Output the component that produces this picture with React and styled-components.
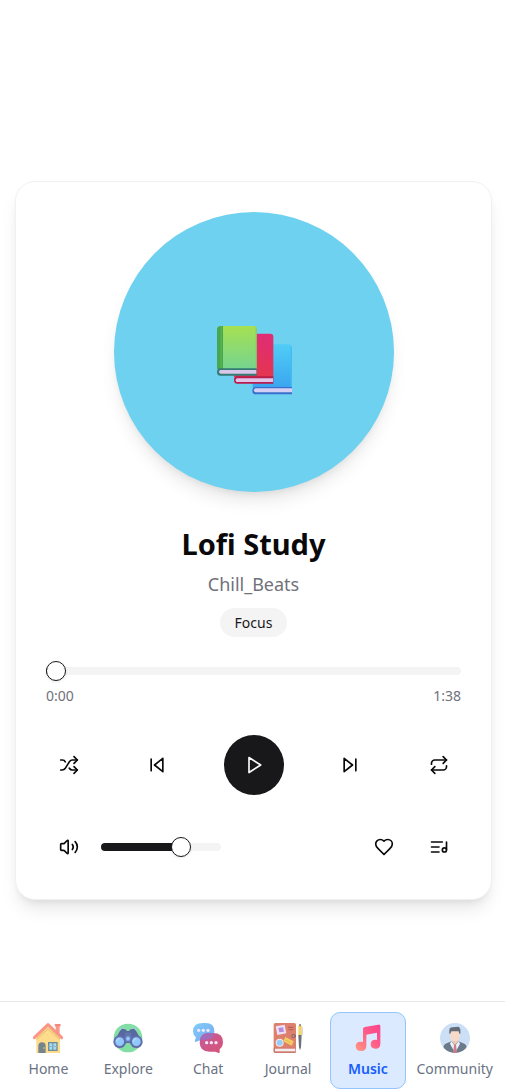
import React, { useState } from "react";
import styled, { createGlobalStyle } from "styled-components";
import { Shuffle, Repeat, Volume2 } from "lucide-react";

const GlobalStyle = createGlobalStyle`
  *, *::before, *::after { box-sizing: border-box; }
  body {
    margin: 0;
    background: #fff;
    color: #09090b;
    font-family: "Noto Sans", "Open Sans", sans-serif;
  }
  h1, p { margin: 0; }
  button { font: inherit; color: inherit; cursor: pointer; }
`;

const Page = styled.div`
  min-height: 100vh;
  display: flex;
  flex-direction: column;
`;

const Main = styled.main`
  flex: 1;
  display: flex;
  align-items: center;
  justify-content: center;
  padding: 80px 13px 0 15px;
`;

const Card = styled.section`
  width: 100%;
  max-width: 560px;
  display: flex;
  flex-direction: column;
  padding: 30px;
  border: 1px solid #f1f1f2;
  border-radius: 20px;
  background: #fff;
  box-shadow: 0 12px 18px -4px rgba(0, 0, 0, 0.1), 0 5px 8px -5px rgba(0, 0, 0, 0.1);
`;

const Cover = styled.div`
  width: 280px;
  height: 280px;
  align-self: center;
  display: flex;
  align-items: center;
  justify-content: center;
  padding: 16px 0 0 2px;
  border-radius: 50%;
  background: #6dd1ef;
  box-shadow: 0 12px 18px -4px rgba(0, 0, 0, 0.1), 0 5px 8px -5px rgba(0, 0, 0, 0.1);
`;

const TrackInfo = styled.div`
  display: flex;
  flex-direction: column;
  align-items: center;
  margin-top: 32px;
`;

const Title = styled.h1`
  font-size: 29px;
  line-height: 40px;
  font-weight: 700;
`;

const Artist = styled.p`
  margin-top: 5px;
  font-size: 18px;
  line-height: 30px;
  color: #71717a;
`;

const Badge = styled.span`
  margin-top: 9px;
  padding: 0 15px;
  border-radius: 15px;
  background: #f4f4f5;
  color: #18181b;
  font-size: 14px;
  line-height: 29px;
`;

const Slider = styled.input`
  --fill: calc(10px + (100% - 20px) * ${(p) => p.$ratio});
  appearance: none;
  display: block;
  width: ${(p) => p.$width || "100%"};
  height: 20px;
  margin: 0;
  background: transparent;
  cursor: pointer;

  &::-webkit-slider-runnable-track {
    height: 8px;
    border-radius: 4px;
    background: linear-gradient(to right, #18181b var(--fill), #f4f4f5 var(--fill));
  }
  &::-webkit-slider-thumb {
    appearance: none;
    width: 20px;
    height: 20px;
    margin-top: -6px;
    border: 1px solid #18181b;
    border-radius: 50%;
    background: #fff;
    box-shadow: 0 1px 3px rgba(0, 0, 0, 0.1);
  }
`;

const Progress = styled.div`
  margin-top: 24px;
`;

const Times = styled.div`
  display: flex;
  justify-content: space-between;
  margin-top: 5px;
  font-size: 14px;
  line-height: 20px;
  color: #71717a;
`;

const Controls = styled.div`
  display: flex;
  align-items: center;
  justify-content: space-between;
  margin-top: 29px;
`;

const Group = styled.div`
  display: flex;
  align-items: center;
  gap: 10px;
`;

const IconButton = styled.button`
  width: ${(p) => (p.$primary ? "60px" : "45px")};
  height: ${(p) => (p.$primary ? "60px" : "45px")};
  display: flex;
  align-items: center;
  justify-content: center;
  padding: 0;
  border: 0;
  border-radius: ${(p) => (p.$primary ? "50%" : "8px")};
  background: ${(p) => (p.$primary ? "#18181b" : "transparent")};
  color: ${(p) => (p.$primary ? "#fafafa" : "#09090b")};
`;

const Nav = styled.nav`
  display: flex;
  gap: 3px;
  padding: 10px 5px 1px 10px;
  border-top: 1px solid #e5e7eb;
  background: #fff;
`;

const NavItem = styled.a`
  flex: 1 1 0;
  display: flex;
  flex-direction: column;
  align-items: center;
  gap: 5px;
  padding: 10px 6px 8px;
  border: 1px solid ${(p) => (p.$active ? "#93c5fd" : "transparent")};
  border-radius: 10px;
  background: ${(p) => (p.$active ? "#dbeafe" : "transparent")};
  color: ${(p) => (p.$active ? "#155dfc" : "#6a7282")};
  font-size: 14px;
  line-height: 22px;
  font-weight: ${(p) => (p.$active ? 600 : 400)};
  text-decoration: none;
`;

const Glyph = ({ children }) => (
  <svg width="20" height="20" viewBox="0 0 24 24" fill="none" stroke="currentColor"
    strokeWidth="2" strokeLinecap="round" strokeLinejoin="round" aria-hidden="true">
    {children}
  </svg>
);

const Books = () => (
  <svg width="76" height="70" viewBox="0 0 228 210" aria-hidden="true">
    <defs>
      <linearGradient id="bookGreen" x2="0" y2="1">
        <stop stopColor="#a6e052" /><stop offset="1" stopColor="#75d58f" />
      </linearGradient>
      <linearGradient id="bookRed" x2="0" y2="1">
        <stop stopColor="#df2c76" /><stop offset="1" stopColor="#e5364f" />
      </linearGradient>
      <linearGradient id="bookBlue" x2="0" y2="1">
        <stop stopColor="#50cdf6" /><stop offset="1" stopColor="#3ba5ef" />
      </linearGradient>
    </defs>
    <path d="M107 70q0-12 12-12h95q11 0 11 11v120H107z" fill="url(#bookBlue)" />
    <path d="M221 62q4 3 4 9v117h-4z" fill="#42bdf4" />
    <path d="M116 186h109v22H116q-10 0-10-11t10-11z" fill="#3a6fce" />
    <path d="M116 190h109v12H116q-5 0-5-6t5-6z" fill="#d5d0f3" />
    <path d="M51 38q0-12 12-12h97q9 0 9 9v122H51z" fill="url(#bookRed)" />
    <path d="M61 154h108v22H61q-10 0-10-11t10-11z" fill="#b91c4d" />
    <path d="M61 160h107v11H61q-5 0-5-5.500t5-5.500z" fill="#e1c4e8" />
    <path d="M0 14Q0 3 11 3h100q8 0 8 8v121H0z" fill="url(#bookGreen)" />
    <path d="M0 14Q0 3 11 3h7v129H0z" fill="#49a650" />
    <path d="M11 3h3v129h-3z" fill="#5fb852" />
    <path d="M116 5q3 2 3 6v121h-3z" fill="#83c95d" />
    <path d="M10 130h109v22H10q-10 0-10-11t10-11z" fill="#357b75" />
    <path d="M11 135h107v11H11q-5 0-5-5.500t5-5.500z" fill="#d9c7e9" />
  </svg>
);

const NavSvg = ({ children }) => (
  <svg width="30" height="30" viewBox="0 0 90 90" aria-hidden="true">{children}</svg>
);

const HomeIcon = () => (
  <NavSvg>
    <path d="M68 6h12v30L68 24z" fill="#f49a8d" />
    <rect x="65" y="3" width="18" height="7" rx="2" fill="#f7867d" />
    <path d="M10 45 45 12l36 33v45H10z" fill="#ffdc8c" />
    <path d="M10 45 45 12l36 33v8L45 21 10 53z" fill="#f3cb7c" />
    <path d="M4 44 45 5l41 39" fill="none" stroke="#fc9584" strokeWidth="9" strokeLinecap="round" strokeLinejoin="round" />
    <path d="M16 90V69q0-11 11-11t11 11v21z" fill="#74858c" />
    <circle cx="33" cy="75" r="2" fill="#ffdc8c" />
    <rect x="45" y="57" width="29" height="27" fill="#718a96" />
    <path d="M49 61h9v19h-9zM61 61h9v19h-9z" fill="#a2dcf5" />
    <path d="M46 69h27v3H46z" fill="#8fb4c3" />
  </NavSvg>
);

const ExploreIcon = () => (
  <NavSvg>
    <circle cx="45" cy="45" r="43" fill="#82dea3" />
    <path d="M23 20q3-8 11-4l8 8h6l8-8q8-4 11 4l19 33-22 17-15-10h-8L26 70 4 53z" fill="#59679f" />
    <path d="M21 21q6-9 15-4M54 17q9-5 15 4" fill="none" stroke="#a7dbe5" strokeWidth="3" />
    <path d="M35 29h20v30H35z" fill="#6274b1" />
    <circle cx="20" cy="56" r="19" fill="#626eae" />
    <circle cx="70" cy="56" r="19" fill="#626eae" />
    <circle cx="20" cy="56" r="13" fill="#91c9fb" />
    <circle cx="70" cy="56" r="13" fill="#91c9fb" />
    <path d="M11 56q0-9 9-9M61 56q0-9 9-9" fill="none" stroke="#b0dbfc" strokeWidth="4" />
    <circle cx="45" cy="47" r="7" fill="#80b5f0" />
    <circle cx="45" cy="47" r="3" fill="#a9d8fb" />
  </NavSvg>
);

const ChatIcon = () => (
  <NavSvg>
    <defs>
      <linearGradient id="chatBlue" x2="1" y2="1">
        <stop stopColor="#7dcdfa" /><stop offset="1" stopColor="#7ba8ef" />
      </linearGradient>
      <linearGradient id="chatPink" x2="1" y2="1">
        <stop stopColor="#c45c98" /><stop offset="1" stopColor="#d85379" />
      </linearGradient>
    </defs>
    <path d="M30 0h8q26 0 26 25T38 50H26L8 57q-4 0-2-6l3-8Q0 36 0 25 0 0 30 0z" fill="url(#chatBlue)" />
    <path d="M48 30h12q30 0 30 27 0 14-10 22v8q0 5-5 2l-8-3H49Q20 86 20 58t28-28z" fill="url(#chatPink)" />
    <path d="M21 50q5-20 28-20h14q-3 20-25 20z" fill="#a46bb8" />
    <g fill="#eee9fa">
      <circle cx="17" cy="22" r="5" /><circle cx="31" cy="22" r="5" /><circle cx="45" cy="22" r="5" />
      <circle cx="41" cy="59" r="5" /><circle cx="55" cy="59" r="5" /><circle cx="69" cy="59" r="5" />
    </g>
  </NavSvg>
);

const JournalIcon = () => (
  <NavSvg>
    <rect x="2" y="0" width="67" height="90" rx="5" fill="#dd806c" />
    <path d="M2 74h67v11q0 5-5 5H7q-5 0-5-5z" fill="#cf786c" />
    <path d="M6 77h61v8H6z" fill="#f4edf0" />
    <path d="m8 10 27-5 5 26-27 5z" fill="#eee0fa" />
    <path d="m16 15 14-2 3 13-14 2z" fill="#b48dd5" />
    <path d="M45 13h16M47 20h14" stroke="#ad5b59" strokeWidth="3" />
    <circle cx="20" cy="59" r="12" fill="#f3e9ee" />
    <circle cx="20" cy="59" r="9" fill="#96cdf6" />
    <path d="m37 42 25 13-6 13-25-13z" fill="#f6ce63" />
    <path d="m38 51 17 9" stroke="#d9a95a" strokeWidth="2" />
    <path d="M57 39h12" stroke="#9d645e" strokeWidth="6" />
    <circle cx="61" cy="39" r="6" fill="#855e60" />
    <circle cx="61" cy="39" r="3" fill="#d1a18f" />
    <path d="M76 10q5-11 10 0v27H76z" fill="#f6d65e" />
    <path d="M79 3h4v7h-4zM76 36h10l-2 37-3 9-3-9z" fill="#6d7078" />
    <path d="M86 12h3v25h-3z" fill="#c6c8ce" />
  </NavSvg>
);

const MusicIcon = () => (
  <NavSvg>
    <defs>
      <linearGradient id="note" x1="0" y1="1" x2="1" y2="0">
        <stop stopColor="#ff9a84" /><stop offset="0.55" stopColor="#ff5d88" /><stop offset="1" stopColor="#fb408e" />
      </linearGradient>
    </defs>
    <path
      d="M30 18q0-5 5-6l41-7q6-1 6 5v52q0 15-15 15-14 0-14-13 0-14 14-14 3 0 5 1V29l-32 6v34q0 15-16 15Q8 84 8 70t14-14q5 0 8 1z"
      fill="url(#note)"
    />
  </NavSvg>
);

const CommunityIcon = () => (
  <NavSvg>
    <clipPath id="avatar"><circle cx="45" cy="45" r="45" /></clipPath>
    <g clipPath="url(#avatar)">
      <path d="M0 0h90v90H0z" fill="#cbdff7" />
      <path d="M10 90V74q0-9 10-13l15-6h20l15 6q10 4 10 13v16z" fill="#6a7b8c" />
      <path d="m34 55 11 14 11-14 4 7-15 28-15-28z" fill="#edf2f8" />
      <path d="M36 47h18v10l-9 9-9-9z" fill="#ecc7b5" />
      <path d="M42 65h6l3 25H39z" fill="#d17b86" />
      <path d="M30 22h30v13q0 19-15 19T30 35z" fill="#f8dacb" />
      <path d="M28 32V22q0-10 11-9l16-2q8 2 6 21h-3l-2-7H34l-3 7z" fill="#626d78" />
    </g>
  </NavSvg>
);

const NAV_ITEMS = [
  { label: "Home", Icon: HomeIcon },
  { label: "Explore", Icon: ExploreIcon },
  { label: "Chat", Icon: ChatIcon },
  { label: "Journal", Icon: JournalIcon },
  { label: "Music", Icon: MusicIcon },
  { label: "Community", Icon: CommunityIcon },
];

const DURATION = 98;

const formatTime = (seconds) =>
  `${Math.floor(seconds / 60)}:${String(seconds % 60).padStart(2, "0")}`;

export default function App() {
  const [position, setPosition] = useState(0);
  const [volume, setVolume] = useState(70);

  return (
    <Page>
      <GlobalStyle />
      <Main>
        <Card>
          <Cover><Books /></Cover>
          <TrackInfo>
            <Title>Lofi Study</Title>
            <Artist>Chill_Beats</Artist>
            <Badge>Focus</Badge>
          </TrackInfo>
          <Progress>
            <Slider
              type="range" min="0" max={DURATION} aria-label="Track position"
              value={position} $ratio={position / DURATION}
              onChange={(e) => setPosition(Number(e.target.value))}
            />
            <Times>
              <span>{formatTime(position)}</span>
              <span>{formatTime(DURATION)}</span>
            </Times>
          </Progress>
          <Controls>
            <IconButton type="button" aria-label="Shuffle"><Shuffle size={20} /></IconButton>
            <IconButton type="button" aria-label="Previous">
              <Glyph><path d="M19 20 9 12l10-8zM5 19V5" /></Glyph>
            </IconButton>
            <IconButton type="button" aria-label="Play" $primary>
              <Glyph><path d="m6 3 14 9-14 9z" /></Glyph>
            </IconButton>
            <IconButton type="button" aria-label="Next">
              <Glyph><path d="m5 4 10 8-10 8zM19 5v14" /></Glyph>
            </IconButton>
            <IconButton type="button" aria-label="Repeat"><Repeat size={20} /></IconButton>
          </Controls>
          <Controls>
            <Group>
              <IconButton type="button" aria-label="Mute"><Volume2 size={20} /></IconButton>
              <Slider
                type="range" min="0" max="100" aria-label="Volume" $width="120px"
                value={volume} $ratio={volume / 100}
                onChange={(e) => setVolume(Number(e.target.value))}
              />
            </Group>
            <Group>
              <IconButton type="button" aria-label="Like">
                <Glyph>
                  <path d="M19 14c1.490-1.460 3-3.210 3-5.500A5.500 5.500 0 0 0 16.500 3c-1.760 0-3 .5-4.500 2-1.500-1.500-2.740-2-4.500-2A5.500 5.500 0 0 0 2 8.500c0 2.300 1.500 4.050 3 5.500l7 7Z" />
                </Glyph>
              </IconButton>
              <IconButton type="button" aria-label="Queue">
                <Glyph>
                  <path d="M21 15V6M12 12H3M16 6H3M12 18H3" />
                  <circle cx="18.500" cy="15.500" r="2.500" />
                </Glyph>
              </IconButton>
            </Group>
          </Controls>
        </Card>
      </Main>
      <Nav aria-label="Main">
        {NAV_ITEMS.map(({ label, Icon }) => (
          <NavItem
            key={label} href={`#${label.toLowerCase()}`}
            $active={label === "Music"} aria-current={label === "Music" ? "page" : undefined}
          >
            <Icon />
            <span>{label}</span>
          </NavItem>
        ))}
      </Nav>
    </Page>
  );
}
